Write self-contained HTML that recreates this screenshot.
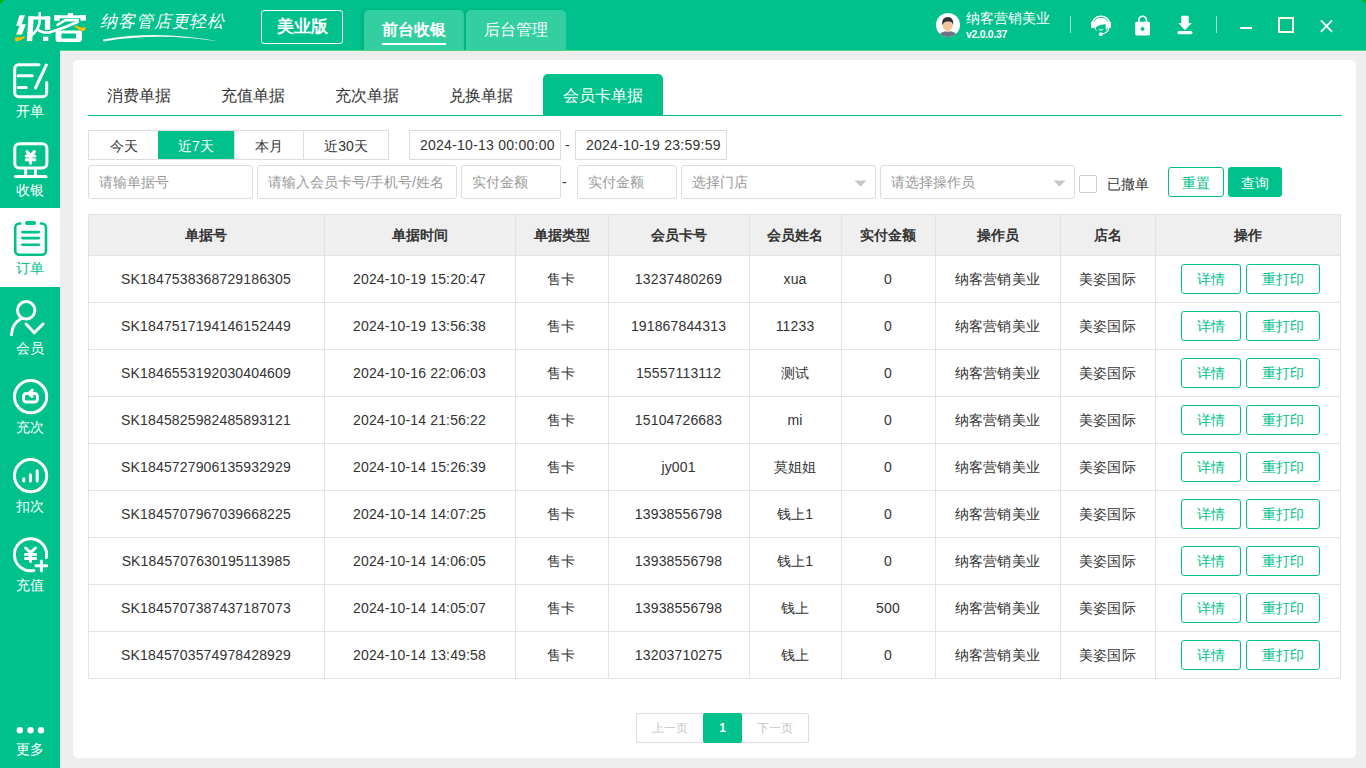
<!DOCTYPE html>
<html><head><meta charset="utf-8"><style>
*{margin:0;padding:0;box-sizing:border-box}
html,body{width:1366px;height:768px;overflow:hidden;background:#eeeeee;font-family:"Liberation Sans",sans-serif;color:#333}
.a{position:absolute}
.t{position:absolute;white-space:nowrap;line-height:1}
#hdr{position:absolute;left:0;top:0;width:1366px;height:50px;background:#00c18b}
#side{position:absolute;left:0;top:50px;width:60px;height:718px;background:#00c18b}
.card{position:absolute;left:73px;top:60px;width:1283px;height:698px;background:#fff;border-radius:5px}
.navtxt{position:absolute;left:0;width:60px;text-align:center;font-size:14px;color:#fff;line-height:14px}
.tab{position:absolute;top:74px;height:41px;font-size:16px;line-height:43px;text-align:center;color:#333}
.qb{position:absolute;top:131px;height:28px;line-height:30px;text-align:center;font-size:14px;color:#333}
.inp{position:absolute;height:34px;border:1px solid #dcdcdc;border-radius:3px;font-size:14px;color:#999;line-height:33px;padding-left:10px;white-space:nowrap}
.th{position:absolute;top:215px;height:40px;line-height:41px;text-align:center;font-size:14px;font-weight:bold;color:#333}
.td{position:absolute;height:46px;line-height:47px;text-align:center;font-size:14px;letter-spacing:0.15px;color:#333;white-space:nowrap}
.btn{position:absolute;height:30px;border:1px solid #00c18b;border-radius:3px;color:#00c18b;font-size:14px;line-height:29px;text-align:center;background:#fff}
</style></head><body>
<div id="hdr"></div>
<div class="a" style="left:0;top:50px;width:1366px;height:1px;background:#4edb84"></div>
<div id="side"></div>
<div class="a" style="left:60px;top:51px;width:1306px;height:1px;background:#f4eff2"></div>
<svg class="a" style="left:0;top:0" width="1366" height="4"><path d="M0,0 H4 V1 H2 V2 H1 V4 H0 Z M1362,0 H1366 V4 H1365 V2 H1364 V1 H1362 Z" fill="#00b400"/></svg>
<svg class="a" style="left:0;top:0" width="240" height="50"><g fill="#fff"><path d="M19.5,15.3 L25,15.3 L21.7,24.2 L25.9,24.2 L22,34.6 L16.2,34.6 L19.6,25.8 L16.2,25.8 Z"/><path d="M28.4,16.4 L33.8,16.4 L32.2,40.9 L26.8,40.9 Z"/><rect x="28.4" y="16.4" width="21.8" height="3.2"/><rect x="44.9" y="16.4" width="5.3" height="13.5"/><rect x="43" y="36.6" width="5.3" height="4.3"/><rect x="67.8" y="13" width="5.3" height="3"/><rect x="54.2" y="15.3" width="31.7" height="3"/><rect x="54.2" y="15.3" width="5.6" height="5.4"/><rect x="80.4" y="15.3" width="5.5" height="5.4"/><path fill-rule="evenodd" d="M55.6,30.5 H81.9 V39.3 Q81.9,41.9 79,41.9 H58.5 Q55.6,41.9 55.6,39.3 Z M61.5,33.4 V38.6 H75.9 V33.4 Z"/></g><path d="M39.7,12.2 V21 Q39.5,28.5 31.5,35.5" stroke="#fff" stroke-width="2.6" fill="none"/><path d="M37.5,29.2 Q42,33.5 50,32.3 Q64,28 78.6,21.4" stroke="#fff" stroke-width="2.7" fill="none"/><path d="M57.6,24.9 L65.5,20" stroke="#fff" stroke-width="2.5" fill="none" stroke-linecap="round"/><path d="M65,20.2 H78.8" stroke="#fff" stroke-width="2.6" fill="none"/><path d="M15,37.3 Q20.5,37.6 25.4,35.9 Q24.5,38.6 21,39.9 Q18,41 15.4,41.2 Z" fill="#fcbf00"/><path d="M73.6,26.2 Q76.5,25.2 79.5,26.9 Q82.5,27.9 86,27 Q85.8,30.2 83.5,30.9 Q81,31.2 78.5,29.2 Q76,27.3 73.6,26.2 Z" fill="#fcbf00"/><path d="M103,39.4 Q160,29.6 219,41.6 Q160,32.2 103.5,41.4 Z" fill="#fff" opacity="0.95"/></svg>
<div class="t" style="left:100px;top:13px;font-size:17px;color:#fff;letter-spacing:0.9px;font-style:italic;font-weight:300">纳客管店更轻松</div>
<div class="a" style="left:261px;top:10px;width:82px;height:34px;border:1.5px solid #fff;border-radius:3px;color:#fff;font-weight:bold;font-size:17px;line-height:31px;text-align:center">美业版</div>
<div class="a" style="left:364px;top:10px;width:100px;height:40px;background:#34cfa0;border-radius:5px 5px 0 0;box-shadow:-2px 0 3px rgba(0,60,40,0.12)"></div>
<div class="a" style="left:466px;top:10px;width:100px;height:40px;background:#34cfa0;border-radius:5px 5px 0 0;box-shadow:-2px 0 3px rgba(0,60,40,0.12)"></div>
<div class="t" style="left:382px;top:22px;font-size:16px;font-weight:bold;color:#fff">前台收银</div>
<div class="a" style="left:382px;top:43px;width:64px;height:2px;background:#fff"></div>
<div class="t" style="left:484px;top:22px;font-size:16px;color:#fff">后台管理</div>
<svg class="a" style="left:932px;top:9px" width="32" height="32"><defs><clipPath id="cc"><circle cx="16" cy="16" r="12"/></clipPath></defs><circle cx="16" cy="16" r="12" fill="#fff"/><g clip-path="url(#cc)"><ellipse cx="16" cy="27.6" rx="9.6" ry="5.6" fill="#6f7388"/><rect x="14" y="20" width="3.5" height="3" fill="#f3c49c"/><ellipse cx="15.7" cy="16.9" rx="5.1" ry="4.5" fill="#f3c49c"/><path d="M10,15.6 Q9.6,8.1 16,8.1 Q21.6,8.2 21.3,15.4 L20.6,15.2 Q20.3,12.3 16,12.5 Q11.6,12.5 10.9,15.5 Z" fill="#333"/></g></svg>
<div class="t" style="left:966px;top:11px;font-size:14px;color:#fff">纳客营销美业</div>
<div class="t" style="left:966px;top:29px;font-size:10.5px;color:#fff;font-weight:bold;letter-spacing:-0.3px">v2.0.0.37</div>
<div class="a" style="left:1070px;top:16px;width:1px;height:17px;background:#9fe6cc"></div>
<div class="a" style="left:1216px;top:16px;width:1px;height:17px;background:#9fe6cc"></div>
<svg class="a" style="left:1086px;top:10px" width="30" height="30"><path d="M6.3,12.5 A9.2,9.2 0 0 1 23.7,12.5" stroke="#fff" stroke-width="1.4" fill="none"/><rect x="5.1" y="11.7" width="3" height="6.3" rx="0.5" fill="#fff"/><rect x="22" y="11.7" width="3" height="6.3" rx="0.5" fill="#fff"/><path d="M7.6,14.5 Q8,7.8 15,7.8 Q22,7.8 22.4,14.5 Q22.2,18.5 20,20.5 L19.4,14 Q17.5,14.5 15,15 Q11,15.5 9.8,17.5 Q9.8,20 11.6,21.6 Q8,19.5 7.6,14.5 Z" fill="#fff"/><path d="M17.6,13.2 L18.3,12 L19.4,14 Z" fill="#fff"/><path d="M12.8,19.6 Q15,20.6 17.2,19.4" stroke="#fff" stroke-width="0.9" fill="none"/><path d="M22.8,18 Q22,23.2 15.2,24.1" stroke="#fff" stroke-width="1.2" fill="none"/><circle cx="14.8" cy="24.2" r="1.9" fill="#fff"/></svg>
<svg class="a" style="left:1130px;top:12px" width="24" height="26"><path d="M8.8,10.5 V8.1 A3.8,3.8 0 0 1 16.4,8.1 V10.5" stroke="#fff" stroke-width="1.6" fill="none"/><rect x="5.2" y="9.8" width="14.8" height="13.7" rx="1.5" fill="#fff"/><circle cx="12.6" cy="16.9" r="1.9" fill="#00c18b"/></svg>
<svg class="a" style="left:1174px;top:12px" width="22" height="26"><path d="M8.3,3.8 H13.7 Q14.7,3.8 14.7,4.8 V10.9 H17.7 L10.9,18.3 L4.3,10.9 H7.3 V4.8 Q7.3,3.8 8.3,3.8 Z" fill="#fff"/><rect x="3.4" y="18.9" width="15.1" height="3.3" rx="1.6" fill="#fff"/></svg>
<div class="a" style="left:1240px;top:27px;width:12px;height:2px;background:#fff"></div>
<div class="a" style="left:1278px;top:17px;width:16px;height:16px;border:2px solid #fffde6"></div>
<svg class="a" style="left:1316px;top:16px" width="20" height="20"><path d="M4.9,4.4 L16.1,15.9 M16.1,4.4 L4.9,15.9" stroke="#fff" stroke-width="1.9"/></svg>
<div class="a" style="left:0;top:208px;width:60px;height:79px;background:#fff"></div>
<svg class="a" style="left:0;top:0" width="60" height="768"><path d="M39,64.7 H18.7 A4,4 0 0 0 14.7,68.7 V92.7 A4,4 0 0 0 18.7,96.7 H42.7 A4,4 0 0 0 46.7,92.7 V82.6" stroke="#fff" fill="none" stroke-width="3" stroke-linecap="round" stroke-linejoin="round"/><path d="M18.2,75.7 H32.3 M18.2,87.6 H26.2" stroke="#fff" fill="none" stroke-width="3" stroke-linecap="round" stroke-linejoin="round" stroke-linecap="butt"/><path d="M46.3,65 L35.5,88" stroke="#fff" fill="none" stroke-width="3" stroke-linecap="round" stroke-linejoin="round" stroke-width="2.7"/><rect x="14.8" y="143.7" width="32.1" height="24.2" rx="4.5" stroke="#fff" fill="none" stroke-width="3" stroke-linecap="round" stroke-linejoin="round"/><path d="M25.6,169 V175 M35.5,169 V175" stroke="#fff" fill="none" stroke-width="3" stroke-linecap="round" stroke-linejoin="round" stroke-width="2.8"/><path d="M15.5,176.4 H46" stroke="#fff" fill="none" stroke-width="3" stroke-linecap="round" stroke-linejoin="round" stroke-width="2.6"/><path d="M26.9,151.6 L30.6,155.5 L34.4,151.6 M26.2,156 H34.9 M26.2,159.8 H34.9 M30.6,155.5 V163.2" stroke="#fff" fill="none" stroke-width="3" stroke-linecap="round" stroke-linejoin="round" stroke-width="2.4"/><path d="M20.3,223.5 H19.2 A4,4 0 0 0 15.2,227.5 V250.8 A4,4 0 0 0 19.2,254.8 H42 A4,4 0 0 0 46,250.8 V227.5 A4,4 0 0 0 42,223.5 H40.9" stroke="#00c18b" fill="none" stroke-width="2.6" stroke-linecap="round" stroke-linejoin="round"/><rect x="25" y="221" width="11.1" height="4.1" rx="2" fill="#00c18b"/><path d="M22.4,232.1 H38.8 M22.4,238.1 H38.8 M22.4,244.7 H38.8" stroke="#00c18b" fill="none" stroke-width="2.6" stroke-linecap="round" stroke-linejoin="round" stroke-width="2.3"/><circle cx="26.2" cy="310.3" r="8.7" stroke="#fff" fill="none" stroke-width="3" stroke-linecap="round" stroke-linejoin="round" stroke-width="2.9"/><path d="M21,318.8 A19,19 0 0 0 11.5,334.8" stroke="#fff" fill="none" stroke-width="3" stroke-linecap="round" stroke-linejoin="round" stroke-width="2.9"/><path d="M26,324 L34.3,332.8 L43,324" stroke="#fff" fill="none" stroke-width="3" stroke-linecap="round" stroke-linejoin="round" stroke-width="2.9" stroke-linecap="butt"/><circle cx="30.6" cy="396.7" r="16.1" stroke="#fff" fill="none" stroke-width="3" stroke-linecap="round" stroke-linejoin="round" stroke-width="2.8"/><path d="M28.6,393.4 H26.3 A2.8,2.8 0 0 0 23.5,396.2 V399.1 A2.8,2.8 0 0 0 26.3,401.9 H34.6 A2.8,2.8 0 0 0 37.4,399.1 V396.2 A2.8,2.8 0 0 0 34.6,393.4 H30" stroke="#fff" fill="none" stroke-width="3" stroke-linecap="round" stroke-linejoin="round" stroke-width="2.2"/><path d="M32.3,390.1 L28.8,393.3 L32,396.4" stroke="#fff" fill="none" stroke-width="3" stroke-linecap="round" stroke-linejoin="round" stroke-width="2.2"/><circle cx="30.6" cy="475.7" r="16.1" stroke="#fff" fill="none" stroke-width="3" stroke-linecap="round" stroke-linejoin="round" stroke-width="2.8"/><path d="M23.8,478.8 V481 M30.4,474.8 V481 M37.2,470.8 V481" stroke="#fff" fill="none" stroke-width="3" stroke-linecap="round" stroke-linejoin="round" stroke-width="3.4"/><path d="M46.4,557.5 A16.1,16.1 0 1 0 33.8,570.5" stroke="#fff" fill="none" stroke-width="3" stroke-linecap="round" stroke-linejoin="round" stroke-width="2.8"/><path d="M25.6,548 L30.55,552.6 L35.4,548 M25.5,554.6 H35.6 M25.5,558.4 H35.6 M30.55,552.6 V561.6" stroke="#fff" fill="none" stroke-width="3" stroke-linecap="round" stroke-linejoin="round" stroke-width="2.7"/><path d="M41.4,561 V570.8 M36,565.7 H46.6" stroke="#fff" fill="none" stroke-width="3" stroke-linecap="round" stroke-linejoin="round" stroke-width="2.7"/><circle cx="19.8" cy="730.2" r="3.2" fill="#fff"/><circle cx="30.5" cy="730.2" r="3.2" fill="#fff"/><circle cx="41" cy="730.2" r="3.2" fill="#fff"/></svg>
<div class="navtxt" style="top:104px;color:#fff">开单</div>
<div class="navtxt" style="top:183px;color:#fff">收银</div>
<div class="navtxt" style="top:261px;color:#00c18b">订单</div>
<div class="navtxt" style="top:341px;color:#fff">会员</div>
<div class="navtxt" style="top:420px;color:#fff">充次</div>
<div class="navtxt" style="top:499px;color:#fff">扣次</div>
<div class="navtxt" style="top:578px;color:#fff">充值</div>
<div class="navtxt" style="top:742px;color:#fff">更多</div>
<div class="card"></div>
<div class="tab" style="left:87px;width:104px">消费单据</div>
<div class="tab" style="left:201px;width:104px">充值单据</div>
<div class="tab" style="left:315px;width:104px">充次单据</div>
<div class="tab" style="left:429px;width:104px">兑换单据</div>
<div class="tab" style="left:543px;width:120px;background:#00c18b;color:#fff;border-radius:5px 5px 0 0">会员卡单据</div>
<div class="a" style="left:88px;top:115px;width:1254px;height:1px;background:#00c18b"></div>
<div class="a" style="left:88px;top:130px;width:301px;height:30px;border:1px solid #dcdcdc"></div>
<div class="qb" style="left:89px;width:69px;">今天</div>
<div class="qb" style="left:158px;width:76px;background:#00c18b;color:#fff;">近7天</div>
<div class="qb" style="left:234px;width:70px;">本月</div>
<div class="qb" style="left:304px;width:84px;">近30天</div>
<div class="a" style="left:234px;top:131px;width:1px;height:28px;background:#dcdcdc"></div>
<div class="a" style="left:303px;top:131px;width:1px;height:28px;background:#dcdcdc"></div>
<div class="a" style="left:409px;top:130px;width:152px;height:30px;border:1px solid #dcdcdc;font-size:14px;color:#333;line-height:28px;padding-left:10px;letter-spacing:0.25px;white-space:nowrap">2024-10-13 00:00:00</div>
<div class="t" style="left:565px;top:138px;font-size:14px;color:#333">-</div>
<div class="a" style="left:575px;top:130px;width:152px;height:30px;border:1px solid #dcdcdc;font-size:14px;color:#333;line-height:28px;padding-left:10px;letter-spacing:0.25px;white-space:nowrap">2024-10-19 23:59:59</div>
<div class="inp" style="left:88px;top:165px;width:165px">请输单据号</div>
<div class="inp" style="left:257px;top:165px;width:200px">请输入会员卡号/手机号/姓名</div>
<div class="inp" style="left:461px;top:165px;width:100px">实付金额</div>
<div class="t" style="left:562px;top:175px;font-size:14px;color:#333">-</div>
<div class="inp" style="left:577px;top:165px;width:100px">实付金额</div>
<div class="inp" style="left:681px;top:165px;width:195px">选择门店</div>
<div class="inp" style="left:880px;top:165px;width:195px">请选择操作员</div>
<svg class="a" style="left:851px;top:176.5px" width="220" height="14"><path d="M3.5,3.5 H15.5 L9.5,9.5Z M202.5,3.5 H214.5 L208.5,9.5Z" fill="#c6c6c6"/></svg>
<div class="a" style="left:1079px;top:175px;width:18px;height:18px;border:1px solid #cfcfcf;border-radius:2px;background:#fff"></div>
<div class="t" style="left:1107px;top:177px;font-size:14px;color:#333">已撤单</div>
<div class="btn" style="left:1168px;top:167px;width:56px;height:30px;line-height:30px">重置</div>
<div class="btn" style="left:1228px;top:167px;width:54px;height:30px;line-height:30px;background:#00c18b;color:#fff">查询</div>
<div class="a" style="left:88px;top:215px;width:1253px;height:40px;background:#efefef"></div>
<div class="a" style="left:88px;top:214px;width:1253px;height:1px;background:#e3e3e3"></div>
<div class="a" style="left:88px;top:214px;width:1px;height:465px;background:#e3e3e3"></div>
<div class="a" style="left:1340px;top:214px;width:1px;height:465px;background:#e3e3e3"></div>
<div class="a" style="left:88px;top:255px;width:1253px;height:1px;background:#e3e3e3"></div>
<div class="a" style="left:88px;top:302px;width:1253px;height:1px;background:#e3e3e3"></div>
<div class="a" style="left:88px;top:349px;width:1253px;height:1px;background:#e3e3e3"></div>
<div class="a" style="left:88px;top:396px;width:1253px;height:1px;background:#e3e3e3"></div>
<div class="a" style="left:88px;top:443px;width:1253px;height:1px;background:#e3e3e3"></div>
<div class="a" style="left:88px;top:490px;width:1253px;height:1px;background:#e3e3e3"></div>
<div class="a" style="left:88px;top:537px;width:1253px;height:1px;background:#e3e3e3"></div>
<div class="a" style="left:88px;top:584px;width:1253px;height:1px;background:#e3e3e3"></div>
<div class="a" style="left:88px;top:631px;width:1253px;height:1px;background:#e3e3e3"></div>
<div class="a" style="left:88px;top:678px;width:1253px;height:1px;background:#e3e3e3"></div>
<div class="a" style="left:324px;top:214px;width:1px;height:465px;background:#e3e3e3"></div>
<div class="a" style="left:515px;top:214px;width:1px;height:465px;background:#e3e3e3"></div>
<div class="a" style="left:608px;top:214px;width:1px;height:465px;background:#e3e3e3"></div>
<div class="a" style="left:749px;top:214px;width:1px;height:465px;background:#e3e3e3"></div>
<div class="a" style="left:841px;top:214px;width:1px;height:465px;background:#e3e3e3"></div>
<div class="a" style="left:935px;top:214px;width:1px;height:465px;background:#e3e3e3"></div>
<div class="a" style="left:1060px;top:214px;width:1px;height:465px;background:#e3e3e3"></div>
<div class="a" style="left:1155px;top:214px;width:1px;height:465px;background:#e3e3e3"></div>
<div class="th" style="left:88px;width:236px">单据号</div>
<div class="th" style="left:324px;width:191px">单据时间</div>
<div class="th" style="left:515px;width:93px">单据类型</div>
<div class="th" style="left:608px;width:141px">会员卡号</div>
<div class="th" style="left:749px;width:92px">会员姓名</div>
<div class="th" style="left:841px;width:94px">实付金额</div>
<div class="th" style="left:935px;width:125px">操作员</div>
<div class="th" style="left:1060px;width:95px">店名</div>
<div class="th" style="left:1155px;width:186px">操作</div>
<div class="td" style="left:88px;top:256px;width:236px">SK1847538368729186305</div>
<div class="td" style="left:324px;top:256px;width:191px">2024-10-19 15:20:47</div>
<div class="td" style="left:515px;top:256px;width:93px">售卡</div>
<div class="td" style="left:608px;top:256px;width:141px">13237480269</div>
<div class="td" style="left:749px;top:256px;width:92px">xua</div>
<div class="td" style="left:841px;top:256px;width:94px">0</div>
<div class="td" style="left:935px;top:256px;width:125px">纳客营销美业</div>
<div class="td" style="left:1060px;top:256px;width:95px">美姿国际</div>
<div class="btn" style="left:1181px;top:264px;width:60px">详情</div>
<div class="btn" style="left:1246px;top:264px;width:74px">重打印</div>
<div class="td" style="left:88px;top:303px;width:236px">SK1847517194146152449</div>
<div class="td" style="left:324px;top:303px;width:191px">2024-10-19 13:56:38</div>
<div class="td" style="left:515px;top:303px;width:93px">售卡</div>
<div class="td" style="left:608px;top:303px;width:141px">191867844313</div>
<div class="td" style="left:749px;top:303px;width:92px">11233</div>
<div class="td" style="left:841px;top:303px;width:94px">0</div>
<div class="td" style="left:935px;top:303px;width:125px">纳客营销美业</div>
<div class="td" style="left:1060px;top:303px;width:95px">美姿国际</div>
<div class="btn" style="left:1181px;top:311px;width:60px">详情</div>
<div class="btn" style="left:1246px;top:311px;width:74px">重打印</div>
<div class="td" style="left:88px;top:350px;width:236px">SK1846553192030404609</div>
<div class="td" style="left:324px;top:350px;width:191px">2024-10-16 22:06:03</div>
<div class="td" style="left:515px;top:350px;width:93px">售卡</div>
<div class="td" style="left:608px;top:350px;width:141px">15557113112</div>
<div class="td" style="left:749px;top:350px;width:92px">测试</div>
<div class="td" style="left:841px;top:350px;width:94px">0</div>
<div class="td" style="left:935px;top:350px;width:125px">纳客营销美业</div>
<div class="td" style="left:1060px;top:350px;width:95px">美姿国际</div>
<div class="btn" style="left:1181px;top:358px;width:60px">详情</div>
<div class="btn" style="left:1246px;top:358px;width:74px">重打印</div>
<div class="td" style="left:88px;top:397px;width:236px">SK1845825982485893121</div>
<div class="td" style="left:324px;top:397px;width:191px">2024-10-14 21:56:22</div>
<div class="td" style="left:515px;top:397px;width:93px">售卡</div>
<div class="td" style="left:608px;top:397px;width:141px">15104726683</div>
<div class="td" style="left:749px;top:397px;width:92px">mi</div>
<div class="td" style="left:841px;top:397px;width:94px">0</div>
<div class="td" style="left:935px;top:397px;width:125px">纳客营销美业</div>
<div class="td" style="left:1060px;top:397px;width:95px">美姿国际</div>
<div class="btn" style="left:1181px;top:405px;width:60px">详情</div>
<div class="btn" style="left:1246px;top:405px;width:74px">重打印</div>
<div class="td" style="left:88px;top:444px;width:236px">SK1845727906135932929</div>
<div class="td" style="left:324px;top:444px;width:191px">2024-10-14 15:26:39</div>
<div class="td" style="left:515px;top:444px;width:93px">售卡</div>
<div class="td" style="left:608px;top:444px;width:141px">jy001</div>
<div class="td" style="left:749px;top:444px;width:92px">莫姐姐</div>
<div class="td" style="left:841px;top:444px;width:94px">0</div>
<div class="td" style="left:935px;top:444px;width:125px">纳客营销美业</div>
<div class="td" style="left:1060px;top:444px;width:95px">美姿国际</div>
<div class="btn" style="left:1181px;top:452px;width:60px">详情</div>
<div class="btn" style="left:1246px;top:452px;width:74px">重打印</div>
<div class="td" style="left:88px;top:491px;width:236px">SK1845707967039668225</div>
<div class="td" style="left:324px;top:491px;width:191px">2024-10-14 14:07:25</div>
<div class="td" style="left:515px;top:491px;width:93px">售卡</div>
<div class="td" style="left:608px;top:491px;width:141px">13938556798</div>
<div class="td" style="left:749px;top:491px;width:92px">钱上1</div>
<div class="td" style="left:841px;top:491px;width:94px">0</div>
<div class="td" style="left:935px;top:491px;width:125px">纳客营销美业</div>
<div class="td" style="left:1060px;top:491px;width:95px">美姿国际</div>
<div class="btn" style="left:1181px;top:499px;width:60px">详情</div>
<div class="btn" style="left:1246px;top:499px;width:74px">重打印</div>
<div class="td" style="left:88px;top:538px;width:236px">SK1845707630195113985</div>
<div class="td" style="left:324px;top:538px;width:191px">2024-10-14 14:06:05</div>
<div class="td" style="left:515px;top:538px;width:93px">售卡</div>
<div class="td" style="left:608px;top:538px;width:141px">13938556798</div>
<div class="td" style="left:749px;top:538px;width:92px">钱上1</div>
<div class="td" style="left:841px;top:538px;width:94px">0</div>
<div class="td" style="left:935px;top:538px;width:125px">纳客营销美业</div>
<div class="td" style="left:1060px;top:538px;width:95px">美姿国际</div>
<div class="btn" style="left:1181px;top:546px;width:60px">详情</div>
<div class="btn" style="left:1246px;top:546px;width:74px">重打印</div>
<div class="td" style="left:88px;top:585px;width:236px">SK1845707387437187073</div>
<div class="td" style="left:324px;top:585px;width:191px">2024-10-14 14:05:07</div>
<div class="td" style="left:515px;top:585px;width:93px">售卡</div>
<div class="td" style="left:608px;top:585px;width:141px">13938556798</div>
<div class="td" style="left:749px;top:585px;width:92px">钱上</div>
<div class="td" style="left:841px;top:585px;width:94px">500</div>
<div class="td" style="left:935px;top:585px;width:125px">纳客营销美业</div>
<div class="td" style="left:1060px;top:585px;width:95px">美姿国际</div>
<div class="btn" style="left:1181px;top:593px;width:60px">详情</div>
<div class="btn" style="left:1246px;top:593px;width:74px">重打印</div>
<div class="td" style="left:88px;top:632px;width:236px">SK1845703574978428929</div>
<div class="td" style="left:324px;top:632px;width:191px">2024-10-14 13:49:58</div>
<div class="td" style="left:515px;top:632px;width:93px">售卡</div>
<div class="td" style="left:608px;top:632px;width:141px">13203710275</div>
<div class="td" style="left:749px;top:632px;width:92px">钱上</div>
<div class="td" style="left:841px;top:632px;width:94px">0</div>
<div class="td" style="left:935px;top:632px;width:125px">纳客营销美业</div>
<div class="td" style="left:1060px;top:632px;width:95px">美姿国际</div>
<div class="btn" style="left:1181px;top:640px;width:60px">详情</div>
<div class="btn" style="left:1246px;top:640px;width:74px">重打印</div>
<div class="a" style="left:636px;top:713px;width:173px;height:30px;border:1px solid #dcdcdc;border-radius:2px"></div>
<div class="t" style="left:652px;top:722px;font-size:12px;color:#c4c4c4">上一页</div>
<div class="t" style="left:757px;top:722px;font-size:12px;color:#c4c4c4">下一页</div>
<div class="a" style="left:703px;top:713px;width:39px;height:30px;background:#00c18b;border-radius:2px;color:#fff;font-weight:bold;font-size:12px;line-height:30px;text-align:center">1</div>
</body></html>
